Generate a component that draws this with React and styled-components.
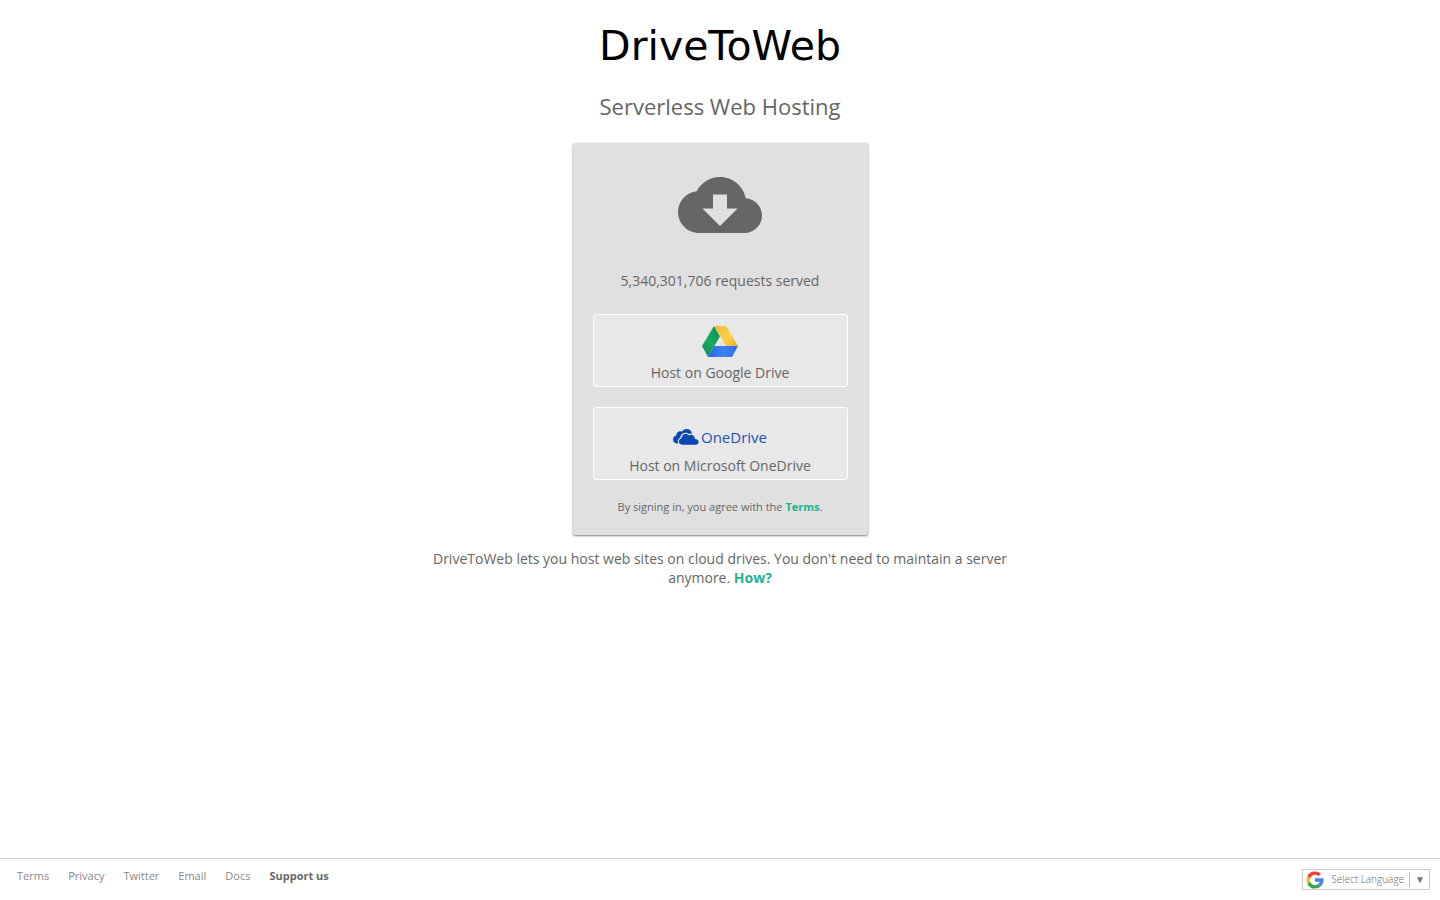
import React from "react";
import styled, { createGlobalStyle } from "styled-components";

const GlobalStyle = createGlobalStyle`
  *, *::before, *::after { box-sizing: border-box; }
  body {
    margin: 0;
    background: #fff;
    color: #666;
    font-family: "Open Sans", sans-serif;
    font-size: 14px;
    line-height: 19px;
  }
  a { text-decoration: none; }
  button { font: inherit; color: inherit; cursor: pointer; }
`;

const Page = styled.div`
  min-height: 100vh;
  display: flex;
  flex-direction: column;
`;

const Main = styled.main`
  flex: 1;
  display: flex;
  flex-direction: column;
  align-items: center;
  padding: 20px 16px;
  text-align: center;
`;

const Title = styled.h1`
  margin: 0;
  color: #000;
  font-family: "DejaVu Sans", sans-serif;
  font-size: 41px;
  font-weight: 400;
  line-height: 52px;
`;

const Subtitle = styled.h2`
  margin: 19px 0 22px;
  font-size: 22px;
  font-weight: 400;
  line-height: 30px;
`;

const Card = styled.section`
  width: 100%;
  max-width: 295px;
  padding: 20px;
  display: flex;
  flex-direction: column;
  align-items: stretch;
  background: #e0e0e0;
  border-radius: 2px;
  box-shadow: 0 1px 3px rgba(0, 0, 0, 0.12), 0 1px 2px rgba(0, 0, 0, 0.4);
`;

const CloudIcon = styled.svg`
  width: 84px;
  height: 84px;
  align-self: center;
  fill: #666;
`;

const Count = styled.p`
  margin: 24px 0;
`;

const HostButton = styled.button`
  height: 73px;
  margin: 0 0 20px;
  padding: 0 0 4px;
  display: flex;
  flex-direction: column;
  align-items: center;
  background: #e8e8e8;
  border: 1px solid #fff;
  border-radius: 3px;
`;

const Brand = styled.span`
  flex: 1;
  display: flex;
  align-items: center;
  gap: 2px;
  padding-top: ${(p) => p.$top};
  color: #1c52b8;
  font-size: 15px;
  line-height: 18px;
`;

const Fine = styled.p`
  margin: 0 0 1px;
  font-size: 11px;
  line-height: 14px;
`;

const Accent = styled.a`
  color: #1bb394;
  font-weight: 700;
`;

const Intro = styled.p`
  width: 100%;
  max-width: 600px;
  margin: 14px 0 0;
`;

const Footer = styled.footer`
  min-height: 42px;
  padding: 10px 10px 10px 17px;
  display: flex;
  justify-content: space-between;
  align-items: flex-start;
  border-top: 1px solid #ccc;
`;

const Links = styled.nav`
  display: flex;
  flex-wrap: wrap;
  gap: 19px;
  font-size: 11px;
  line-height: 14px;
`;

const FooterLink = styled.a`
  color: ${(p) => (p.$strong ? "#666" : "#888")};
  font-weight: ${(p) => (p.$strong ? 700 : 400)};
`;

const Language = styled.button`
  height: 21px;
  padding: 0 4px 0 3px;
  display: flex;
  align-items: center;
  background: #fff;
  border: 1px solid #ccc;
  font-size: 10px;
  line-height: 15px;
`;

const LanguageLabel = styled.span`
  margin-left: 7px;
  padding-right: 5px;
  border-right: 1px solid #bbb;
  color: #666;
  font-weight: 300;
`;

const Caret = styled.span`
  padding-left: 5px;
  color: #767676;
`;

function DriveLogo() {
  return (
    <svg width="36" height="31" viewBox="0 0 36 31" aria-hidden="true">
      <defs>
        <linearGradient id="dg" x1="0" y1="1" x2="1" y2="0">
          <stop offset="0" stopColor="#0b9155" />
          <stop offset="0.5" stopColor="#17a765" />
          <stop offset="1" stopColor="#0c8d50" />
        </linearGradient>
        <linearGradient id="dy" x1="0" y1="0" x2="1" y2="1">
          <stop offset="0" stopColor="#eebd35" />
          <stop offset="0.6" stopColor="#ffcf48" />
          <stop offset="1" stopColor="#e6b02a" />
        </linearGradient>
        <linearGradient id="db" x1="0" y1="0.5" x2="1" y2="0.5">
          <stop offset="0" stopColor="#2163dd" />
          <stop offset="0.5" stopColor="#3f83fb" />
          <stop offset="1" stopColor="#286ae6" />
        </linearGradient>
      </defs>
      <path fill="url(#dg)" d="M12 0l6 10.300L6 31 0 20z" />
      <path fill="url(#dy)" d="M12 0h12l12 20H24z" />
      <path fill="url(#db)" d="M12.300 20H36L30 31H6z" />
    </svg>
  );
}

function OneDriveCloud() {
  return (
    <svg width="26" height="16" viewBox="0 0 26 16" aria-hidden="true">
      <path
        fill="#0b48b4"
        d="M5.500 14.500H4C1.500 14.300 0 12.700 0 10.500c0-2 1.300-3.600 3.300-4C3.200 3.900 5.200 2.200 7.200 2.300c.7 0 1.200.1 1.700.4C9.900 1 11.600.1 13.500.1c3 0 5.100 1.900 5.700 4.500-1.300-.1-2.200.1-3.100.4C14.900 3.900 13.500 3.700 12 3.800 9.100 4.100 7.300 6.200 7.200 8.900c-2.200.7-3.200 3.500-1.700 5.600z"
      />
      <path
        fill="#0b48b4"
        d="M9.200 15.700c-2.100 0-3.400-1.300-3.400-3.100 0-1.700 1.200-3 2.800-3.100-.1-2.700 1.500-4.700 3.900-4.800 1.500 0 2.600.6 3.400 1.700 2.800-1.600 6.100.2 6 3.600 2.200 0 3.700 1.200 3.700 2.900 0 1.600-1.200 2.800-2.900 2.800z"
      />
    </svg>
  );
}

function GoogleLogo() {
  return (
    <svg width="18" height="18" viewBox="3 3 42 42" aria-hidden="true">
      <path fill="#FBBC05" d="M6.300 14.700a20 20 0 0 0-.1 18.400l6.500-5a12 12 0 0 1 .2-8.600z" />
      <path fill="#EA4335" d="M6.300 14.700l6.600 4.800A12 12 0 0 1 31.900 15l5.700-5.700A20 20 0 0 0 6.300 14.700z" />
      <path fill="#34A853" d="M24 44c5.200 0 9.900-2 13.400-5.200l-6.200-5.200A12 12 0 0 1 12.700 28.100l-6.500 5A20 20 0 0 0 24 44z" />
      <path fill="#4285F4" d="M43.600 20H24v8h11.300a12 12 0 0 1-4.100 5.600l6.200 5.200C37 39.200 44 34 44 24c0-1.300-.1-2.700-.4-4z" />
    </svg>
  );
}

const links = ["Terms", "Privacy", "Twitter", "Email", "Docs"];

export default function App() {
  return (
    <Page>
      <GlobalStyle />
      <Main>
        <Title>DriveToWeb</Title>
        <Subtitle>Serverless Web Hosting</Subtitle>
        <Card>
          <CloudIcon viewBox="0 0 24 24" aria-hidden="true">
            <path d="M19.350 10.040C18.670 6.590 15.640 4 12 4 9.110 4 6.600 5.640 5.350 8.040 2.340 8.360 0 10.910 0 14c0 3.310 2.690 6 6 6h13c2.760 0 5-2.240 5-5 0-2.640-2.050-4.780-4.650-4.960zM17 13l-5 5-5-5h3V9h4v4h3z" />
          </CloudIcon>
          <Count>5,340,301,706 requests served</Count>
          <HostButton type="button">
            <Brand $top="4px">
              <DriveLogo />
            </Brand>
            Host on Google Drive
          </HostButton>
          <HostButton type="button">
            <Brand $top="10px">
              <OneDriveCloud />
              OneDrive
            </Brand>
            Host on Microsoft OneDrive
          </HostButton>
          <Fine>
            By signing in, you agree with the <Accent href="#terms">Terms</Accent>.
          </Fine>
        </Card>
        <Intro>
          DriveToWeb lets you host web sites on cloud drives. You don't need to maintain a server
          anymore. <Accent href="#how">How?</Accent>
        </Intro>
      </Main>
      <Footer>
        <Links>
          {links.map((name) => (
            <FooterLink key={name} href={`#${name.toLowerCase()}`}>
              {name}
            </FooterLink>
          ))}
          <FooterLink $strong href="#support">
            Support us
          </FooterLink>
        </Links>
        <Language type="button">
          <GoogleLogo />
          <LanguageLabel>Select Language</LanguageLabel>
          <Caret>▼</Caret>
        </Language>
      </Footer>
    </Page>
  );
}
